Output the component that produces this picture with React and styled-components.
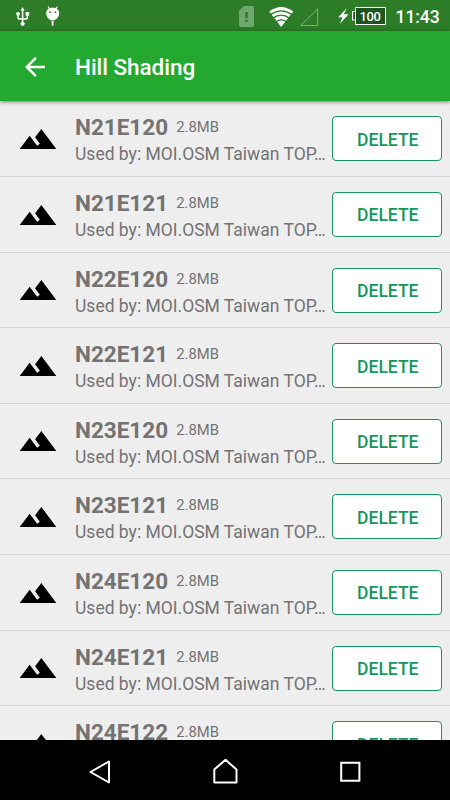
import React from 'react';
import styled, { createGlobalStyle } from 'styled-components';

const GlobalStyle = createGlobalStyle`
  :root {
    --status-bar: #2d7d28;
    --toolbar: #23a92f;
    --background: #eeeeee;
    --divider: #d6d6d6;
    --text: #737373;
    --accent: #16965a;
  }

  body {
    margin: 0;
    font-family: Roboto, 'Liberation Sans', sans-serif;
  }
`;

const Screen = styled.div`
  background: var(--background);
  display: flex;
  flex-direction: column;
  height: 800px;
  overflow: hidden;
  width: 450px;
`;

const StatusBar = styled.div`
  background: var(--status-bar);
  box-sizing: border-box;
  color: #fff;
  display: flex;
  flex: none;
  height: 31px;
  justify-content: space-between;
  padding: 0 10.5px 0 15px;

  svg {
    display: block;
    flex: none;
  }
`;

const StatusGroup = styled.div`
  display: flex;
`;

const BatteryLevel = styled.div`
  align-items: center;
  background: #1d5420;
  border: 1px solid #fff;
  box-sizing: border-box;
  display: flex;
  font-size: 13px;
  font-weight: 500;
  height: 18px;
  justify-content: center;
  letter-spacing: -0.4px;
  line-height: 15px;
  margin-top: 7px;
  width: 31px;
`;

const Clock = styled.div`
  font-size: 17.5px;
  font-weight: 500;
  letter-spacing: -0.1px;
  line-height: 34px;
  margin-left: 10px;
`;

const Toolbar = styled.header`
  align-items: center;
  background: var(--toolbar);
  box-shadow: 0 1px 4px rgba(0, 0, 0, 0.5);
  color: #fff;
  display: flex;
  flex: none;
  height: 70px;
  position: relative;

  svg {
    flex: none;
    margin: 1px 25px 0 20px;
  }

  h1 {
    font-size: 22.5px;
    font-weight: 500;
    letter-spacing: -0.05px;
    line-height: 30px;
    margin: 1px 0 0;
  }
`;

const List = styled.ul`
  box-sizing: border-box;
  flex: 1;
  list-style: none;
  margin: 0;
  min-height: 0;
  overflow: hidden;
  padding: 0.4px 0 0;
`;

const Row = styled.li`
  border-bottom: 1px solid var(--divider);
  box-sizing: border-box;
  display: flex;
  height: 75.6px;

  > svg {
    flex: none;
    margin: 17.6px 17px 0 18px;
  }
`;

const Details = styled.div`
  color: var(--text);
  flex: none;
  padding-top: 13px;
  white-space: nowrap;
  width: 257.3px;
`;

const Heading = styled.div`
  align-items: center;
  display: flex;
  height: 26px;
`;

const Name = styled.span`
  font-size: 22.5px;
  font-weight: bold;
  line-height: 26px;
`;

const Size = styled.span`
  font-size: 14.8px;
  line-height: 18px;
  margin-left: 8.2px;
`;

const Usage = styled.div`
  font-size: 17.5px;
  line-height: 24px;
  margin-top: 2px;
`;

const DeleteButton = styled.button`
  background: #fff;
  border: 1.25px solid var(--accent);
  border-radius: 4px;
  color: var(--accent);
  flex: none;
  font-family: inherit;
  font-size: 17.5px;
  font-weight: 500;
  height: 45px;
  line-height: 22px;
  margin-top: 15px;
  padding: 2px 0 0 1px;
  width: 110px;
`;

const NavigationBar = styled.nav`
  background: #000;
  display: flex;
  flex: none;
  height: 60px;
`;

const files = [
  'N21E120',
  'N21E121',
  'N22E120',
  'N22E121',
  'N23E120',
  'N23E121',
  'N24E120',
  'N24E121',
  'N24E122',
];

function UsbIcon() {
  return (
    <svg width="16" height="31" viewBox="0 0 16 31" fill="#fff">
      <path d="M7.6 7L9.6 10.5H5.6Z" />
      <circle cx="7.6" cy="23.8" r="2.1" />
      <circle cx="3" cy="13.8" r="1.9" />
      <path d="M10.6 12h3.6v3.6h-3.6z" />
      <path
        d="M7.6 9v14M3 14v3.2q0 1.8 1.8 1.8h5.7q1.8 0 1.8-1.8V14"
        fill="none"
        stroke="#fff"
        strokeWidth="1.5"
      />
    </svg>
  );
}

const DebugSvg = styled.svg`
  margin-left: 14px;
`;

function DebugIcon() {
  return (
    <DebugSvg width="16" height="31" viewBox="0 0 16 31">
      <path d="M3 6.5l2 3M12.4 6.5l-2 3" stroke="#fff" strokeWidth="1.1" />
      <path
        d="M1.2 13C1.2 9.8 4 7.8 7.7 7.8s6.5 2 6.5 5.2c0 4-2.8 7.4-6.5 7.4s-6.5-3.4-6.5-7.4z"
        fill="#fff"
      />
      <circle cx="5" cy="12.2" r="0.9" fill="#2d7d28" />
      <circle cx="10.4" cy="12.2" r="0.9" fill="#2d7d28" />
      <path d="M7.6 21v4.6" stroke="#fff" strokeWidth="1.8" />
    </DebugSvg>
  );
}

function SignalIcons() {
  return (
    <svg width="115" height="31" viewBox="0 0 115 31">
      <path d="M5 6H13q2 0 2 2v17q0 2-2 2H2q-2 0-2-2V11z" fill="#70a76d" />
      <path d="M6.3 12h2.4v6H6.3zM6.3 19.7h2.4V22H6.3z" fill="#2d7d28" />
      <path d="M30.2 11.5Q42.2 2.5 54.2 11.5L42.2 27Z" fill="#fff" />
      <path
        d="M31.3 14.6Q42.2 7 53.1 14.6M34 18.1Q42.2 12.3 50.4 18.1M37 21.7Q42.2 18 47.4 21.7"
        fill="none"
        stroke="#2d7d28"
        strokeWidth="1.3"
      />
      <path
        d="M61.8 25.5L78.6 8.8v16.7z"
        fill="none"
        stroke="#7fae7b"
        strokeWidth="1"
      />
      <path
        d="M107.6 8.2L99.2 17.3h4.4L100.600 24l9-9.800h-4.700z"
        fill="#fff"
      />
    </svg>
  );
}

const BatteryTipSvg = styled.svg`
  margin-left: -2px;
`;

function BatteryTip() {
  return (
    <BatteryTipSvg width="3" height="31" viewBox="0 0 3 31">
      <path
        d="M3 11.5H.6V20H3"
        fill="#1d5420"
        stroke="#fff"
        strokeWidth="1.2"
      />
    </BatteryTipSvg>
  );
}

function BackArrow() {
  return (
    <svg width="30" height="30" viewBox="0 0 24 24" fill="#fff">
      <path d="M20 11H7.83l5.59-5.59L12 4l-8 8 8 8 1.41-1.41L7.83 13H20v-2z" />
    </svg>
  );
}

function HillIcon() {
  return (
    <svg width="40" height="40" viewBox="0 0 24 24">
      <path d="M14 6l-3.75 5 2.85 3.8-1.6 1.2C9.81 13.75 7 10 7 10l-6 8h22L14 6z" />
    </svg>
  );
}

function NavigationIcons() {
  return (
    <svg
      width="450"
      height="60"
      viewBox="0 0 450 60"
      fill="none"
      stroke="#fff"
      strokeWidth="2"
      strokeLinejoin="round"
    >
      <path d="M109 21.5v21L90.500 32z" />
      <path d="M214.3 42.5V29.5l11.2-9.7 11 9.7v13z" />
      <path d="M341.2 22.7h18.2v18h-18.2z" strokeLinejoin="miter" />
    </svg>
  );
}

function FileRow({ name }) {
  return (
    <Row>
      <HillIcon />
      <Details>
        <Heading>
          <Name>{name}</Name>
          <Size>2.8MB</Size>
        </Heading>
        <Usage>Used by: MOI.OSM Taiwan TOP…</Usage>
      </Details>
      <DeleteButton type="button">DELETE</DeleteButton>
    </Row>
  );
}

function App() {
  return (
    <>
      <GlobalStyle />
      <Screen>
        <StatusBar>
          <StatusGroup>
            <UsbIcon />
            <DebugIcon />
          </StatusGroup>
          <StatusGroup>
            <SignalIcons />
            <BatteryTip />
            <BatteryLevel>100</BatteryLevel>
            <Clock>11:43</Clock>
          </StatusGroup>
        </StatusBar>
        <Toolbar>
          <BackArrow />
          <h1>Hill Shading</h1>
        </Toolbar>
        <List>
          {files.map((name) => (
            <FileRow key={name} name={name} />
          ))}
        </List>
        <NavigationBar>
          <NavigationIcons />
        </NavigationBar>
      </Screen>
    </>
  );
}

export default App;
